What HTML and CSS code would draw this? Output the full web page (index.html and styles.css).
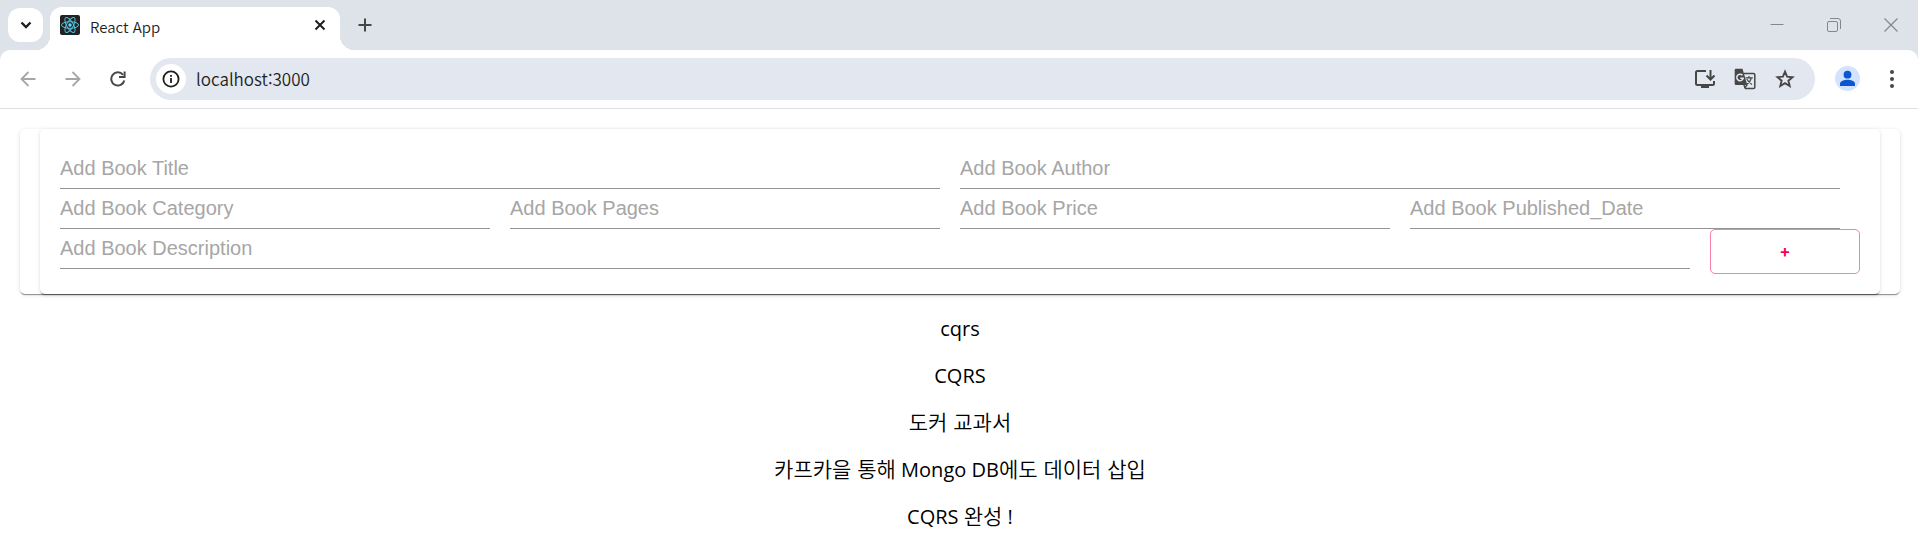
FILE: index.html
```
<!DOCTYPE html>
<html lang="ko">
<head>
    <meta charset="UTF-8" />
    <meta name="viewport" content="width=device-width, initial-scale=1.0" />
    <title>React App</title>
    <link rel="stylesheet" href="styles.css">
</head>
<body>
    <header class="browser">
        <div class="tab-strip">
            <button type="button" class="tab-search" aria-label="Search tabs">
                <svg width="12" height="8" viewBox="0 0 12 8"><path d="M1.5 1.5L6 6l4.500-4.500" fill="none" stroke="#1f1f1f" stroke-width="2.300"/></svg>
            </button>
            <div class="tab">
                <svg class="favicon" width="20" height="20" viewBox="0 0 20 20">
                    <rect width="20" height="20" rx="2" fill="#222"/>
                    <g fill="none" stroke="#53c1de" stroke-width="1">
                        <ellipse cx="10" cy="10" rx="8.500" ry="3.300"/>
                        <ellipse cx="10" cy="10" rx="8.500" ry="3.300" transform="rotate(60 10 10)"/>
                        <ellipse cx="10" cy="10" rx="8.500" ry="3.300" transform="rotate(120 10 10)"/>
                    </g>
                    <circle cx="10" cy="10" r="1.700" fill="#61dafb"/>
                </svg>
                <span class="tab-title">React App</span>
                <button type="button" class="icon-btn" aria-label="Close tab">
                    <svg width="12" height="12" viewBox="0 0 12 12"><path d="M1.500 1.500l9 9M10.500 1.500l-9 9" stroke="#1f1f1f" stroke-width="2"/></svg>
                </button>
            </div>
            <button type="button" class="icon-btn new-tab" aria-label="New tab">
                <svg width="14" height="14" viewBox="0 0 14 14"><path d="M7 .5v13M.5 7h13" stroke="#474747" stroke-width="2"/></svg>
            </button>
            <div class="window-controls">
                <button type="button" class="icon-btn" aria-label="Minimize">
                    <svg width="14" height="14" viewBox="0 0 14 14"><path d="M.5 6.500h13" stroke="#858789"/></svg>
                </button>
                <button type="button" class="icon-btn" aria-label="Restore">
                    <svg width="14" height="14" viewBox="0 0 14 14" fill="none" stroke="#858789"><rect x=".5" y="3.500" width="10" height="10" rx="1.500"/><path d="M3 .5h8a2.500 2.500 0 0 1 2.500 2.500v8"/></svg>
                </button>
                <button type="button" class="icon-btn" aria-label="Close">
                    <svg width="14" height="14" viewBox="0 0 14 14"><path d="M.5 .5l13 13M13.500 .5l-13 13" stroke="#858789" stroke-width="1.200"/></svg>
                </button>
            </div>
        </div>
        <div class="toolbar">
            <div class="nav-buttons">
                <button type="button" class="icon-btn" aria-label="Back" disabled>
                    <svg width="16" height="16" viewBox="0 0 16 16" fill="none" stroke="#a6a6a6" stroke-width="1.800"><path d="M15.500 8H2M8.500 1L1.500 8l7 7"/></svg>
                </button>
                <button type="button" class="icon-btn" aria-label="Forward" disabled>
                    <svg width="16" height="16" viewBox="0 0 16 16" fill="none" stroke="#a6a6a6" stroke-width="1.800"><path d="M.5 8H14M7.500 1l7 7-7 7"/></svg>
                </button>
                <button type="button" class="icon-btn" aria-label="Reload">
                    <svg width="16" height="16" viewBox="0 0 16 16"><path d="M14.300 9.500A6.600 6.600 0 1 1 13 3.800" fill="none" stroke="#474747" stroke-width="2"/><path d="M15.600 .4v6.600H9V5h4.600V.4z" fill="#474747"/></svg>
                </button>
            </div>
            <div class="omnibox">
                <button type="button" class="site-info" aria-label="View site information">
                    <svg width="18" height="18" viewBox="0 0 18 18"><circle cx="9" cy="9" r="7.600" fill="none" stroke="#1f1f1f" stroke-width="1.800"/><path d="M8.100 8h1.800v5H8.100zM8.100 5h1.800v1.800H8.100z" fill="#1f1f1f"/></svg>
                </button>
                <input type="text" class="address" value="localhost:3000" aria-label="Address" />
                <button type="button" class="icon-btn" aria-label="Install app">
                    <svg width="20" height="20" viewBox="0 0 20 20" fill="none" stroke="#474747" stroke-width="2"><path d="M11 2H2.500Q1 2 1 3.500v11Q1 16 2.500 16h15q1.500 0 1.500-1.500V12"/><path d="M15.500 1v9M11.500 6.500l4 4 4-4"/><path d="M6 17.500h8" stroke-width="3"/></svg>
                </button>
                <button type="button" class="icon-btn" aria-label="Translate this page">
                    <svg width="22" height="22" viewBox="0 0 22 22"><path d="M9.500 5.500h10q1.300 0 1.300 1.300v12.400q0 1.300-1.300 1.300h-8L9.500 16" fill="none" stroke="#474747" stroke-width="1.500"/><path d="M2 .8h6.500L13.300 17H2Q.7 17 .7 15.700V2Q.7.8 2 .8z" fill="#474747"/><path d="M8.500 7.200A3.300 3.300 0 1 0 9.300 10.200H6.300" fill="none" stroke="#e2e7f0" stroke-width="1.500"/><path d="M11.500 9.800h7.300M15 8v1.800M17.300 10c-.7 3-2.300 5-4.600 6.500M12.800 11c1.200 2.500 2.800 4 5.200 5.500M10.500 20l3-3.500" fill="none" stroke="#474747" stroke-width="1.200"/></svg>
                </button>
                <button type="button" class="icon-btn" aria-label="Bookmark this tab">
                    <svg width="20" height="20" viewBox="0 0 20 20"><path d="M10 2.700l2.100 5 5.400.5-4.100 3.500 1.300 5.300L10 14.200 5.300 17l1.300-5.300-4.100-3.500 5.400-.5z" fill="none" stroke="#474747" stroke-width="1.900"/></svg>
                </button>
            </div>
            <button type="button" class="profile" aria-label="Profile">
                <svg width="25" height="25" viewBox="0 0 25 25"><circle cx="12.500" cy="12.500" r="12.500" fill="#d3e3fd"/><circle cx="12.500" cy="8.700" r="3.900" fill="#0b57d0"/><path d="M5 20v-2.300c0-2.600 4.500-3.900 7.500-3.900s7.500 1.300 7.500 3.900V20z" fill="#0b57d0"/></svg>
            </button>
            <button type="button" class="icon-btn" aria-label="Menu">
                <svg width="4" height="18" viewBox="0 0 4 18" fill="#474747"><circle cx="2" cy="2" r="2"/><circle cx="2" cy="9" r="2"/><circle cx="2" cy="16" r="2"/></svg>
            </button>
        </div>
    </header>

    <main class="app">
        <section class="paper">
            <form class="paper book-form">
                <div class="form-row">
                    <input type="text" placeholder="Add Book Title" aria-label="Book title" />
                    <input type="text" placeholder="Add Book Author" aria-label="Book author" />
                </div>
                <div class="form-row">
                    <input type="text" placeholder="Add Book Category" aria-label="Book category" />
                    <input type="text" placeholder="Add Book Pages" aria-label="Book pages" />
                    <input type="text" placeholder="Add Book Price" aria-label="Book price" />
                    <input type="text" placeholder="Add Book Published_Date" aria-label="Book published date" />
                </div>
                <div class="form-row submit-row">
                    <input type="text" placeholder="Add Book Description" aria-label="Book description" />
                    <button type="button" class="add-btn">+</button>
                </div>
            </form>
        </section>
        <section class="book-list">
            <p>cqrs</p>
            <p>CQRS</p>
            <p><span class="hangul">도커 교과서</span></p>
            <p><span class="hangul">카프카을 통해</span> Mongo DB<span class="hangul">에도 데이터 삽입</span></p>
            <p>CQRS <span class="hangul">완성</span> !</p>
        </section>
    </main>
</body>
</html>
```
FILE: styles.css
```
* {
    box-sizing: border-box;
}
body {
    margin: 0;
    background-color: #ffffff;
    color: #000000;
    font-family: "Open Sans", "Noto Sans CJK KR", sans-serif;
    font-size: 20px;
}
button {
    display: flex;
    align-items: center;
    justify-content: center;
    padding: 0;
    border: none;
    background: none;
    cursor: pointer;
}
svg {
    display: block;
}

/* browser frame */
.browser {
    background-color: #dee3ea;
}
.tab-strip {
    display: flex;
    align-items: center;
    height: 50px;
    padding: 0 20px 0 8px;
}
.tab-search {
    width: 35px;
    height: 34px;
    border-radius: 12px;
    background-color: #ffffff;
}
.tab {
    position: relative;
    align-self: flex-end;
    display: flex;
    align-items: center;
    width: 290px;
    height: 43px;
    margin-left: 7px;
    padding: 0 14px 7px 10px;
    border-radius: 12px 12px 0 0;
    background-color: #ffffff;
}
.tab::before,
.tab::after {
    content: "";
    position: absolute;
    bottom: 0;
    width: 14px;
    height: 14px;
}
.tab::before {
    right: 100%;
    background: radial-gradient(circle at 0 0, transparent 14px, #ffffff 14px);
}
.tab::after {
    left: 100%;
    background: radial-gradient(circle at 100% 0, transparent 14px, #ffffff 14px);
}
.tab-title {
    flex: 1;
    margin-left: 10px;
    padding-top: 4px;
    font-family: "Noto Sans CJK KR", sans-serif;
    font-size: 15px;
    font-weight: 350;
    line-height: 20px;
    color: #1f1f1f;
}
.new-tab {
    margin-left: 18px;
}
.window-controls {
    display: flex;
    gap: 43px;
    margin-left: auto;
}
.toolbar {
    display: flex;
    align-items: center;
    height: 59px;
    padding: 0 24px 1px 20px;
    border-bottom: 1px solid #dfe1e5;
    border-radius: 10px 10px 0 0;
    background-color: #ffffff;
}
.nav-buttons {
    display: flex;
    gap: 29px;
    margin-right: 24px;
}
.omnibox {
    flex: 1;
    display: flex;
    align-items: center;
    gap: 19px;
    height: 42px;
    padding: 0 20px 0 6px;
    border-radius: 21px;
    background-color: #e2e7f0;
}
.site-info {
    width: 30px;
    height: 30px;
    border-radius: 50%;
    background-color: #ffffff;
}
.address {
    flex: 1;
    min-width: 0;
    margin-left: -9px;
    padding: 0;
    border: none;
    outline: none;
    background: none;
    color: #1f1f1f;
    font-family: "Noto Sans CJK KR", sans-serif;
    font-size: 17px;
    font-weight: 350;
}
.profile {
    margin: 0 30px 0 20px;
}

/* book form */
.app {
    padding: 20px 18px 20px 20px;
}
.paper {
    padding: 0 20px;
    border-radius: 5px;
    background-color: #ffffff;
    box-shadow: 0 2px 1px -1px rgba(0, 0, 0, 0.3), 0 1px 1px 0 rgba(0, 0, 0, 0.14), 0 1px 4px 0 rgba(0, 0, 0, 0.12);
}
.book-form {
    padding: 20px;
}
.form-row {
    display: flex;
    gap: 20px;
    padding-right: 20px;
}
.form-row input {
    flex: 1;
    min-width: 0;
    height: 40px;
    padding: 0;
    border: none;
    border-bottom: 1px solid #949494;
    outline: none;
    background: none;
    font-family: "Liberation Sans", Arial, sans-serif;
    font-size: 20px;
}
.form-row input::placeholder {
    color: #a6a6a6;
}
.submit-row {
    padding-right: 0;
}
.add-btn {
    width: calc(100% / 12);
    height: 45px;
    border: 1px solid #fa80a6;
    border-radius: 5px;
    color: #f50057;
    font-family: Roboto, Arial, sans-serif;
    font-size: 17px;
    font-weight: 500;
}

/* book list */
.book-list {
    padding-top: 1px;
    text-align: center;
}
.book-list p {
    margin: 20px 0;
    line-height: 27px;
}
.hangul {
    font-family: "Noto Sans CJK KR", sans-serif;
    font-size: 21px;
    font-weight: 350;
    line-height: 1;
}
```
